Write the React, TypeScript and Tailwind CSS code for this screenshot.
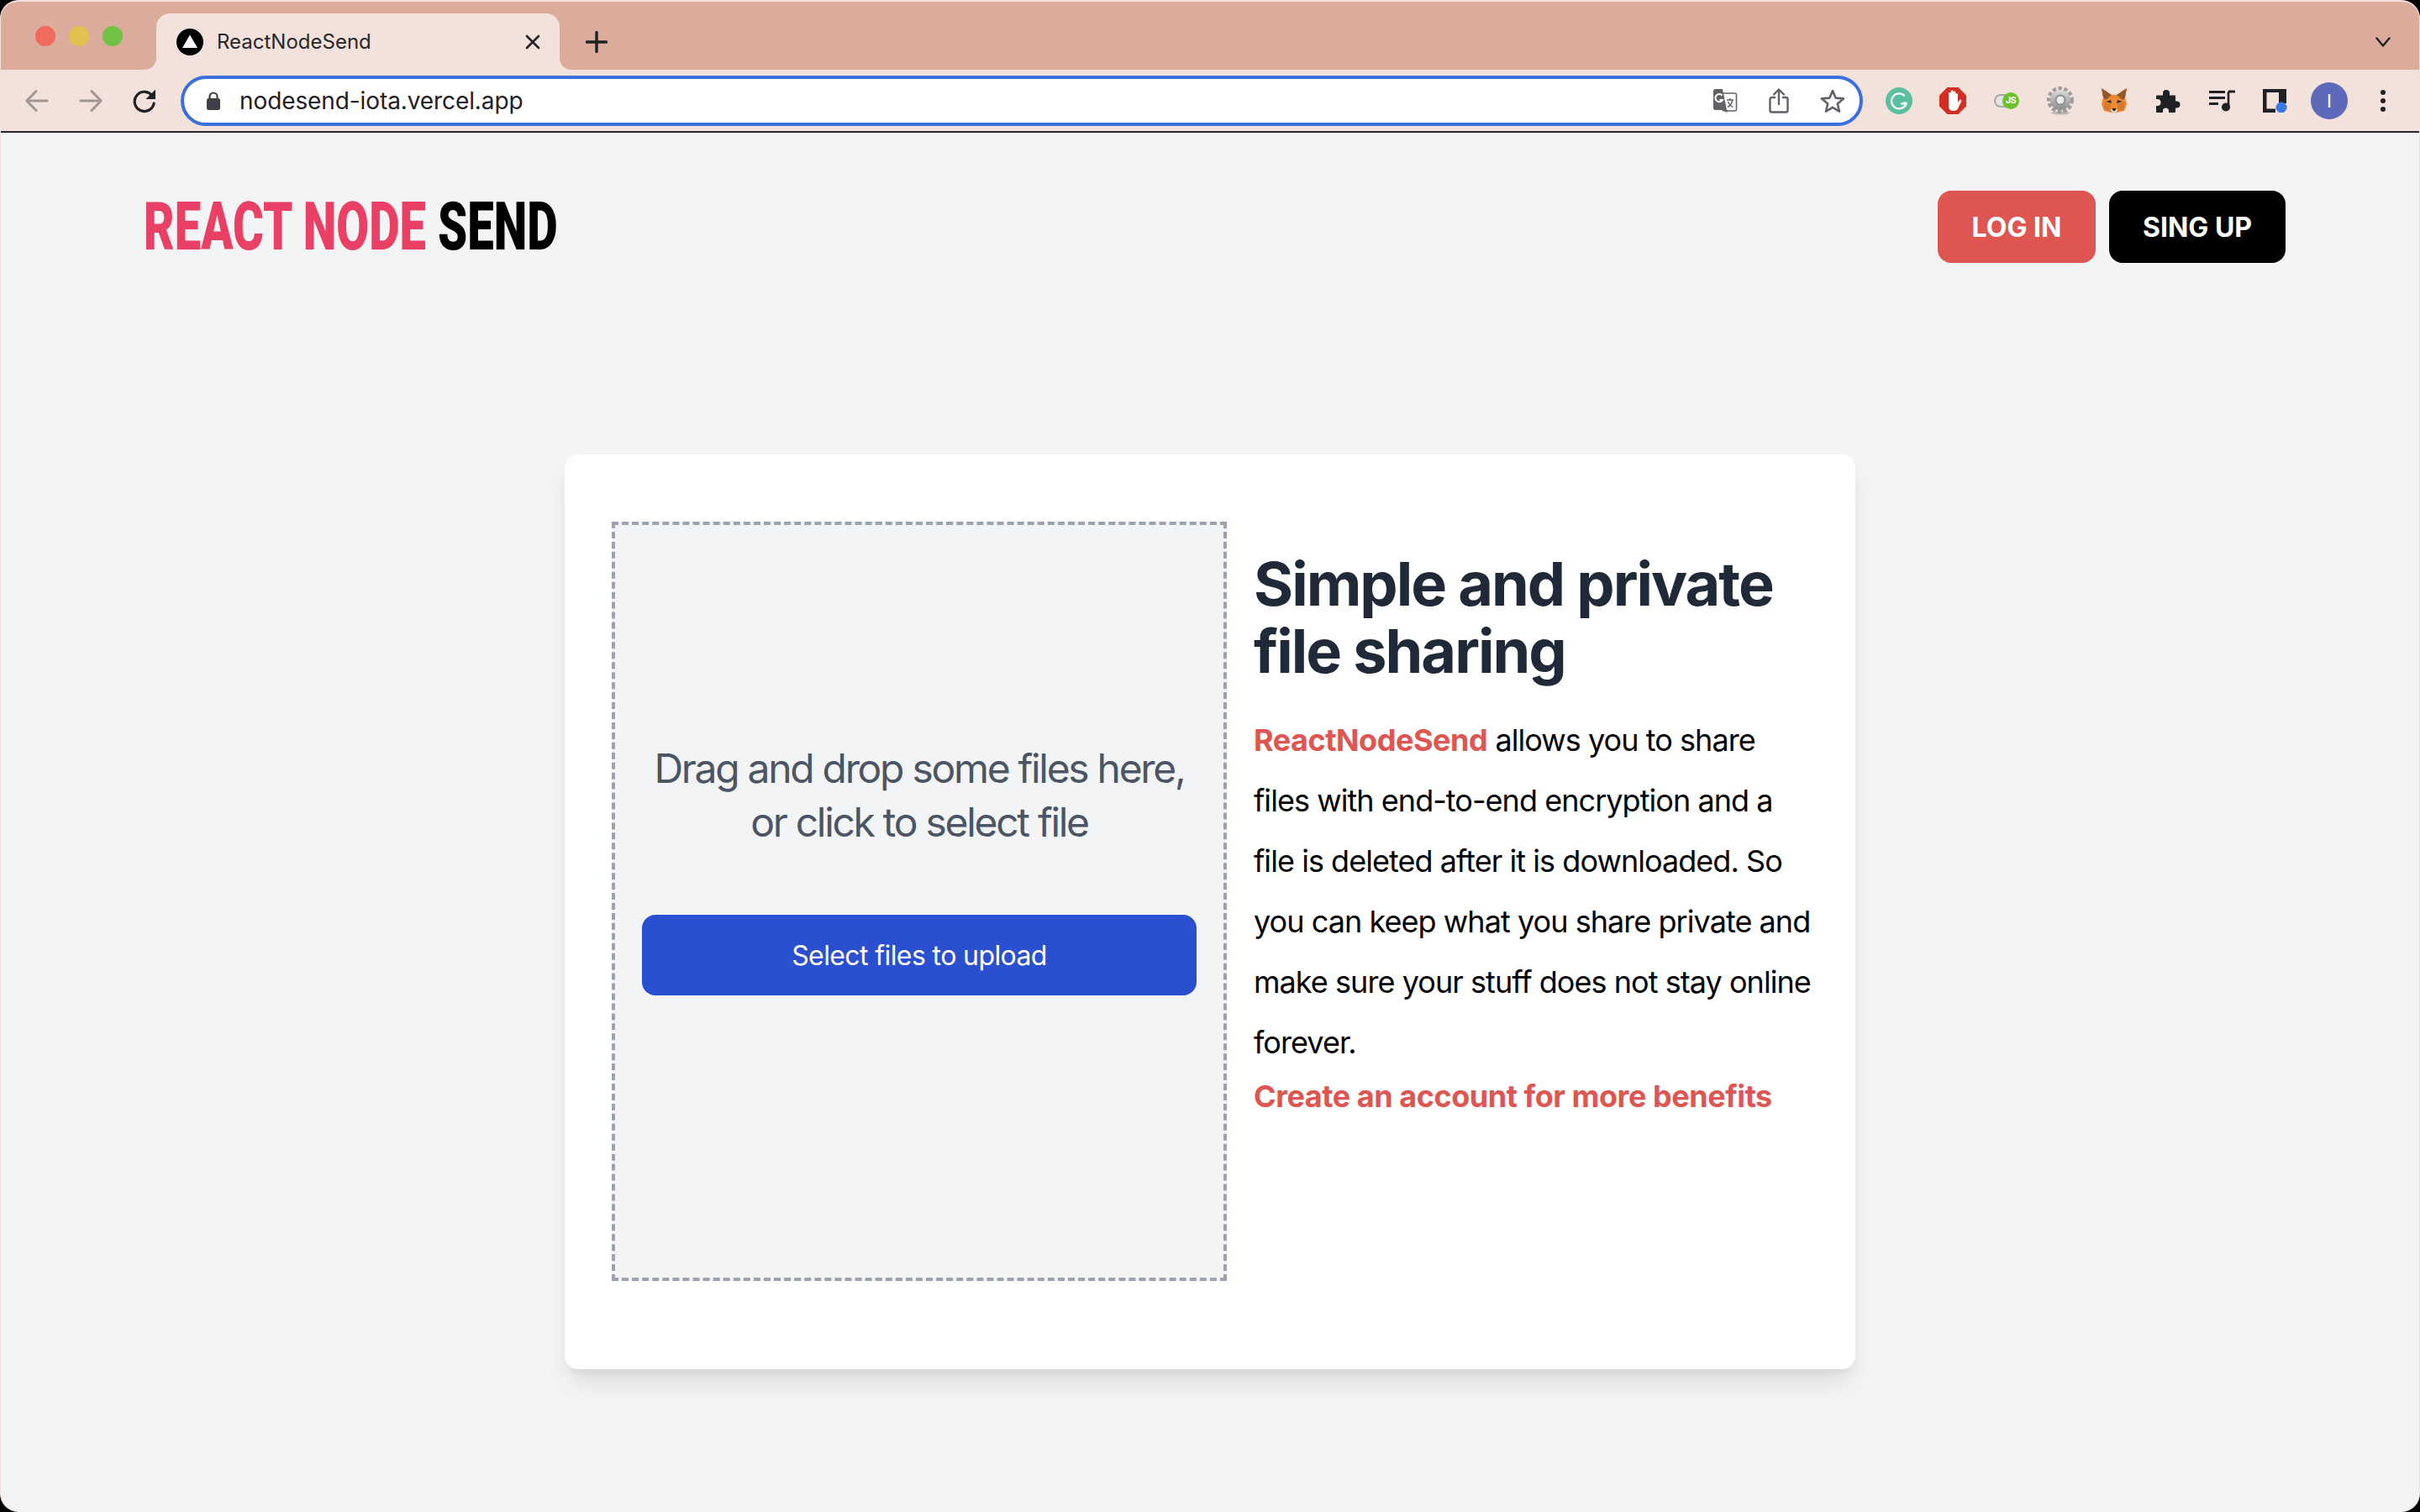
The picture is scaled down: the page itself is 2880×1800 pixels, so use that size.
import React from "react";

const Slot = ({ children, className = "" }: { children: React.ReactNode; className?: string }) => (
  <div className={`w-16 h-[60px] flex items-center justify-center shrink-0 ${className}`}>{children}</div>
);

const Back = ({ flip }: { flip?: boolean }) => (
  <svg width="28" height="28" viewBox="0 0 28 28" fill="none" stroke="#a09894" strokeWidth="3" strokeLinecap="round" strokeLinejoin="round" style={flip ? { transform: "scaleX(-1)" } : undefined}>
    <path d="M26 14H2M13 2.5 1.8 14 13 25.5" />
  </svg>
);

const Reload = () => (
  <svg width="30" height="30" viewBox="0 0 30 30" fill="none">
    <path d="M24.5 9.5A11.6 11.6 0 1 0 26.2 18" stroke="#202124" strokeWidth="3.2" strokeLinecap="round" />
    <path d="M28 1.5V13H16.5Z" fill="#202124" />
  </svg>
);

const Lock = () => (
  <svg width="18" height="22" viewBox="0 0 18 22">
    <path d="M4.5 9V6a4.5 4.5 0 0 1 9 0v3" fill="none" stroke="#3f4045" strokeWidth="2.2" />
    <rect x="1" y="8" width="16" height="14" rx="2.5" fill="#3f4045" />
  </svg>
);

const Translate = () => (
  <svg width="30" height="30" viewBox="0 0 30 30">
    <rect x="12" y="6" width="16.5" height="21" rx="2" fill="#fff" stroke="#5f6368" strokeWidth="1.6" />
    <path d="M1 3.5A2.5 2.5 0 0 1 3.5 1H12l5 25H3.5A2.5 2.5 0 0 1 1 23.5Z" fill="#5f6368" />
    <path d="M11.5 8.6A4.6 4.6 0 1 0 12 14H8.5" fill="none" stroke="#fff" strokeWidth="2" />
    <path d="M17 14h8M21 12v2M24 14c-1 4-3 7-6 8.5M18.5 16c1 3 3 5 6 6.5" fill="none" stroke="#5f6368" strokeWidth="1.4" />
    <path d="m14 26 3 3.5 1-3.5Z" fill="#5f6368" />
  </svg>
);

const Share = () => (
  <svg width="24" height="30" viewBox="0 0 24 30" fill="none" stroke="#5f6368" strokeWidth="2.4" strokeLinecap="round" strokeLinejoin="round">
    <path d="M7 11H3.5A2 2 0 0 0 1.5 13V26.5A2 2 0 0 0 3.5 28.5H20.5A2 2 0 0 0 22.5 26.5V13A2 2 0 0 0 20.5 11H17" />
    <path d="M12 19V2M6 7.5 12 1.5 18 7.5" />
  </svg>
);

const Star = () => (
  <svg width="30" height="30" viewBox="0 0 30 30" fill="none" stroke="#5f6368" strokeWidth="2.6" strokeLinejoin="round">
    <path d="M15 3 18.6 11.6 28 12.4 20.8 18.5 23 27.7 15 22.8 7 27.7 9.2 18.5 2 12.4 11.4 11.6Z" />
  </svg>
);

const Grammarly = () => (
  <svg width="32" height="32" viewBox="0 0 32 32">
    <circle cx="16" cy="16" r="16" fill="#5bc09f" />
    <path d="M22.6 10.2A9 9 0 1 0 24.5 19.5H18" fill="none" stroke="#fff" strokeWidth="2.2" />
    <path d="M25 22.5V17.5H20Z" fill="#fff" />
  </svg>
);

const Adblock = () => (
  <svg width="32" height="32" viewBox="0 0 32 32">
    <path d="M9.5 0H22.5L32 9.5V22.5L22.5 32H9.5L0 22.5V9.5Z" fill="#d32e22" />
    <path d="M11 17V7.5a1.4 1.4 0 0 1 2.8 0V5a1.4 1.4 0 0 1 2.8 0V6a1.4 1.4 0 0 1 2.8 0v2.5a1.3 1.3 0 0 1 2.6 0V18l2-3a1.4 1.4 0 0 1 2.3 1.5L22 25.5c-1 1.5-2.5 2.5-5 2.5-4 0-6-2-6-6Z" fill="#fff" />
  </svg>
);

const JsToggle = () => (
  <div className="relative w-[30px] h-5 flex items-center">
    <div className="w-[24px] h-[16px] rounded-full bg-[#e3e3e3] border-2 border-[#a8a8a8]" />
    <div className="absolute right-0 top-0 w-5 h-5 rounded-full bg-[#6cc12f] flex items-center justify-center text-[11px] leading-none font-bold text-white tracking-[-0.5px]">
      JS
    </div>
  </div>
);

const Gear = () => (
  <svg width="32" height="34" viewBox="0 0 32 34">
    <defs>
      <linearGradient id="gearFill" x1="0" y1="0" x2="0" y2="1">
        <stop offset="0" stopColor="#dcdcdc" />
        <stop offset="1" stopColor="#8b8b8b" />
      </linearGradient>
    </defs>
    <ellipse cx="16" cy="31.5" rx="11" ry="2" fill="#9a9a9a" opacity="0.6" />
    <circle cx="16" cy="16" r="13.5" fill="none" stroke="#9c9c9c" strokeWidth="5" strokeDasharray="4.2 2.55" />
    <circle cx="16" cy="16" r="12" fill="url(#gearFill)" />
    <circle cx="16" cy="16" r="6.5" fill="#8f8f8f" />
    <circle cx="16" cy="16" r="4.5" fill="#f1ece9" />
  </svg>
);

const Fox = () => (
  <svg width="32" height="32" viewBox="0 0 32 32">
    <path d="M1 1 13 9H19L31 1 29 12 31 20 28 28 20 30H12L4 28 1 20 3 12Z" fill="#ec8a33" />
    <path d="M1 1 13 9 6 15 3 12Z" fill="#96572a" />
    <path d="M31 1 19 9 26 15 29 12Z" fill="#96572a" />
    <path d="M4 17 12 20 11 28 4 26Z M28 17 20 20 21 28 28 26Z" fill="#d9792a" />
    <path d="M6 17 12 15 13 19Z M26 17 20 15 19 19Z" fill="#3b3230" />
    <path d="M12 26 20 26 19 31H13Z" fill="#d8cfc7" />
    <path d="M13.5 25H18.5L17 28H15Z" fill="#2b2523" />
  </svg>
);

const Puzzle = () => (
  <svg width="30" height="30" viewBox="0 0 30 30">
    <path d="M2 8.5H9V6a4 4 0 0 1 8 0v2.5H24V15.500h1.500a4 4 0 0 1 0 8H24V28a1 1 0 0 1-1 1H16v-2a3.500 3.500 0 0 0-7 0v2H2a1 1 0 0 1-1-1V21h1.500a4 4 0 0 0 0-8H1V9.500A1 1 0 0 1 2 8.500Z" fill="#202124" />
  </svg>
);

const MusicList = () => (
  <svg width="32" height="26" viewBox="0 0 32 26">
    <path d="M1 2.500H20M1 9.500H20M1 16.500H12" stroke="#202124" strokeWidth="3" />
    <path d="M24 2V20" stroke="#202124" strokeWidth="2.600" />
    <path d="M24 2H32" stroke="#202124" strokeWidth="3" />
    <circle cx="21" cy="20.500" r="5" fill="#202124" />
  </svg>
);

const SidePanel = () => (
  <svg width="30" height="28" viewBox="0 0 30 28">
    <path d="M0 0H28V17H19V4H4.500V23.500H15V28H0Z" fill="#202124" />
    <circle cx="22" cy="22" r="6.500" fill="#3b78e7" />
  </svg>
);

const Kebab = () => (
  <svg width="6" height="26" viewBox="0 0 6 26" fill="#202124">
    <circle cx="3" cy="3" r="3" />
    <circle cx="3" cy="13" r="3" />
    <circle cx="3" cy="23" r="3" />
  </svg>
);

const Flare = ({ side }: { side: "left" | "right" }) => (
  <div className="w-[14px] h-[14px] bg-[#f3e1db] shrink-0">
    <div className={`w-full h-full bg-[#dbac9b] ${side === "left" ? "rounded-br-[14px]" : "rounded-bl-[14px]"}`} />
  </div>
);

export default function App() {
  return (
    <div className="w-full h-[1800px] bg-black font-['Inter',sans-serif]">
      <div className="w-full h-full rounded-[22px] overflow-hidden flex flex-col bg-[#f3f4f6] border-t-2 border-x border-[#f3e1db]">
        {/* tab strip */}
        <div className="h-[81px] shrink-0 bg-[#dbac9b] flex items-end">
          <div className="w-[171px] h-full pl-[41px] flex items-start pt-[29px] gap-4 shrink-0">
            <div className="w-6 h-6 rounded-full bg-[#f06a5e]" />
            <div className="w-6 h-6 rounded-full bg-[#e1c24e]" />
            <div className="w-6 h-6 rounded-full bg-[#71c146]" />
          </div>
          <Flare side="left" />
          <div className="w-[480px] h-[67px] bg-[#f3e1db] rounded-t-[16px] flex items-center pl-[24px] pr-[23px] shrink-0">
            <svg width="32" height="32" viewBox="0 0 32 32" className="shrink-0">
              <circle cx="16" cy="16" r="16" fill="#000" />
              <path d="M16 7.500 25 23H7Z" fill="#fff" />
            </svg>
            <span className="ml-[16px] text-[24px] text-[#26282b] leading-none">ReactNodeSend</span>
            <svg width="18" height="18" viewBox="0 0 18 18" className="ml-auto" stroke="#202124" strokeWidth="2.600" strokeLinecap="round">
              <path d="M2 2 16 16M16 2 2 16" />
            </svg>
          </div>
          <Flare side="right" />
          <div className="h-[67px] flex items-center ml-[17px]">
            <svg width="26" height="26" viewBox="0 0 26 26" stroke="#202124" strokeWidth="3.400" strokeLinecap="round">
              <path d="M13 1.500V24.500M1.500 13H24.500" />
            </svg>
          </div>
          <div className="h-[67px] flex items-center ml-auto mr-[34px]">
            <svg width="18" height="12" viewBox="0 0 18 12" fill="none" stroke="#202124" strokeWidth="2.400" strokeLinecap="round" strokeLinejoin="round">
              <path d="M1.500 1.500 9 10.500 16.500 1.500" />
            </svg>
          </div>
        </div>

        {/* toolbar */}
        <div className="h-[73px] shrink-0 bg-[#f3e1db] flex items-center pl-[11px] pr-[11px]">
          <Slot><Back /></Slot>
          <Slot><Back flip /></Slot>
          <Slot><Reload /></Slot>
          <div className="w-[2002px] h-[60px] ml-[11px] shrink-0 bg-white border-4 border-[#3a6fdd] rounded-full flex items-center">
            <div className="w-[26px] shrink-0" />
            <Lock />
            <span className="ml-[22px] text-[28px] leading-none tracking-[-0.1px] text-[#1f2023]">nodesend-iota.vercel.app</span>
            <div className="ml-auto flex">
              <Slot className="h-[52px]"><Translate /></Slot>
              <Slot className="h-[52px]"><Share /></Slot>
              <Slot className="h-[52px]"><Star /></Slot>
            </div>
          </div>
          <div className="ml-[11px] flex">
            <Slot><Grammarly /></Slot>
            <Slot><Adblock /></Slot>
            <Slot><JsToggle /></Slot>
            <Slot><Gear /></Slot>
            <Slot><Fox /></Slot>
            <Slot><Puzzle /></Slot>
            <Slot><MusicList /></Slot>
            <Slot><SidePanel /></Slot>
            <Slot>
              <div className="w-11 h-11 rounded-full bg-[#5e6ab9] flex items-center justify-center text-white text-[22px] leading-none">I</div>
            </Slot>
            <Slot><Kebab /></Slot>
          </div>
        </div>
        <div className="h-[2px] shrink-0 bg-[#26262a]" />

        {/* page */}
        <header className="flex items-center justify-between pt-[69px] pl-[170px] pr-[159px]">
          <div className="w-[490px] h-[86px] flex items-center">
            <div className="origin-left scale-x-[0.703] whitespace-nowrap text-[80px] leading-none font-black font-['Roboto',sans-serif] text-[#ea4065]">
              REACT NODE <span className="text-black">SEND</span>
            </div>
          </div>
          <nav className="flex gap-4">
            <a className="w-[188px] h-[86px] pt-[2px] rounded-2xl bg-[#df5552] text-white text-[32px] font-bold flex items-center justify-center">LOG IN</a>
            <a className="w-[210px] h-[86px] pt-[2px] rounded-2xl bg-black text-white text-[32px] font-bold flex items-center justify-center">SING UP</a>
          </nav>
        </header>

        <main className="w-[1536px] h-[1089px] mx-auto mt-[228px] bg-white rounded-2xl shadow-[0_20px_30px_-6px_rgba(0,0,0,0.1),0_8px_12px_-4px_rgba(0,0,0,0.05)] flex pl-[56px] pt-[80px] shrink-0">
          <div className="w-[732px] h-[904px] shrink-0 bg-[#f3f4f6] border-4 border-dashed border-[#9ca3af] px-8 pb-[78px] flex flex-col justify-center">
            <p className="text-[48px] leading-[64px] tracking-[-2.3px] text-[#4b5563] text-center mb-[78px]">
              Drag and drop some files here, or click to select file
            </p>
            <button className="w-full h-[96px] pt-[2px] shrink-0 rounded-2xl bg-[#2b4fd1] text-white text-[32px] tracking-[-0.6px]">Select files to upload</button>
          </div>
          <div className="w-[664px] ml-8 pt-[34px] shrink-0">
            <h2 className="text-[72px] leading-[80px] font-bold tracking-[-2px] text-[#1f2937] mb-[30px]">Simple and private file sharing</h2>
            <p className="text-[36px] leading-[72px] tracking-[-0.95px] text-black">
              <span className="font-bold tracking-[-0.45px] text-[#df5552]">ReactNodeSend</span> allows you to share files with end-to-end encryption and a file is deleted after it is downloaded. So you can keep what you share private and make sure your stuff does not stay online forever.
            </p>
            <a className="block text-[36px] leading-[56px] font-bold tracking-[-0.45px] text-[#df5552]">Create an account for more benefits</a>
          </div>
        </main>
      </div>
    </div>
  );
}
